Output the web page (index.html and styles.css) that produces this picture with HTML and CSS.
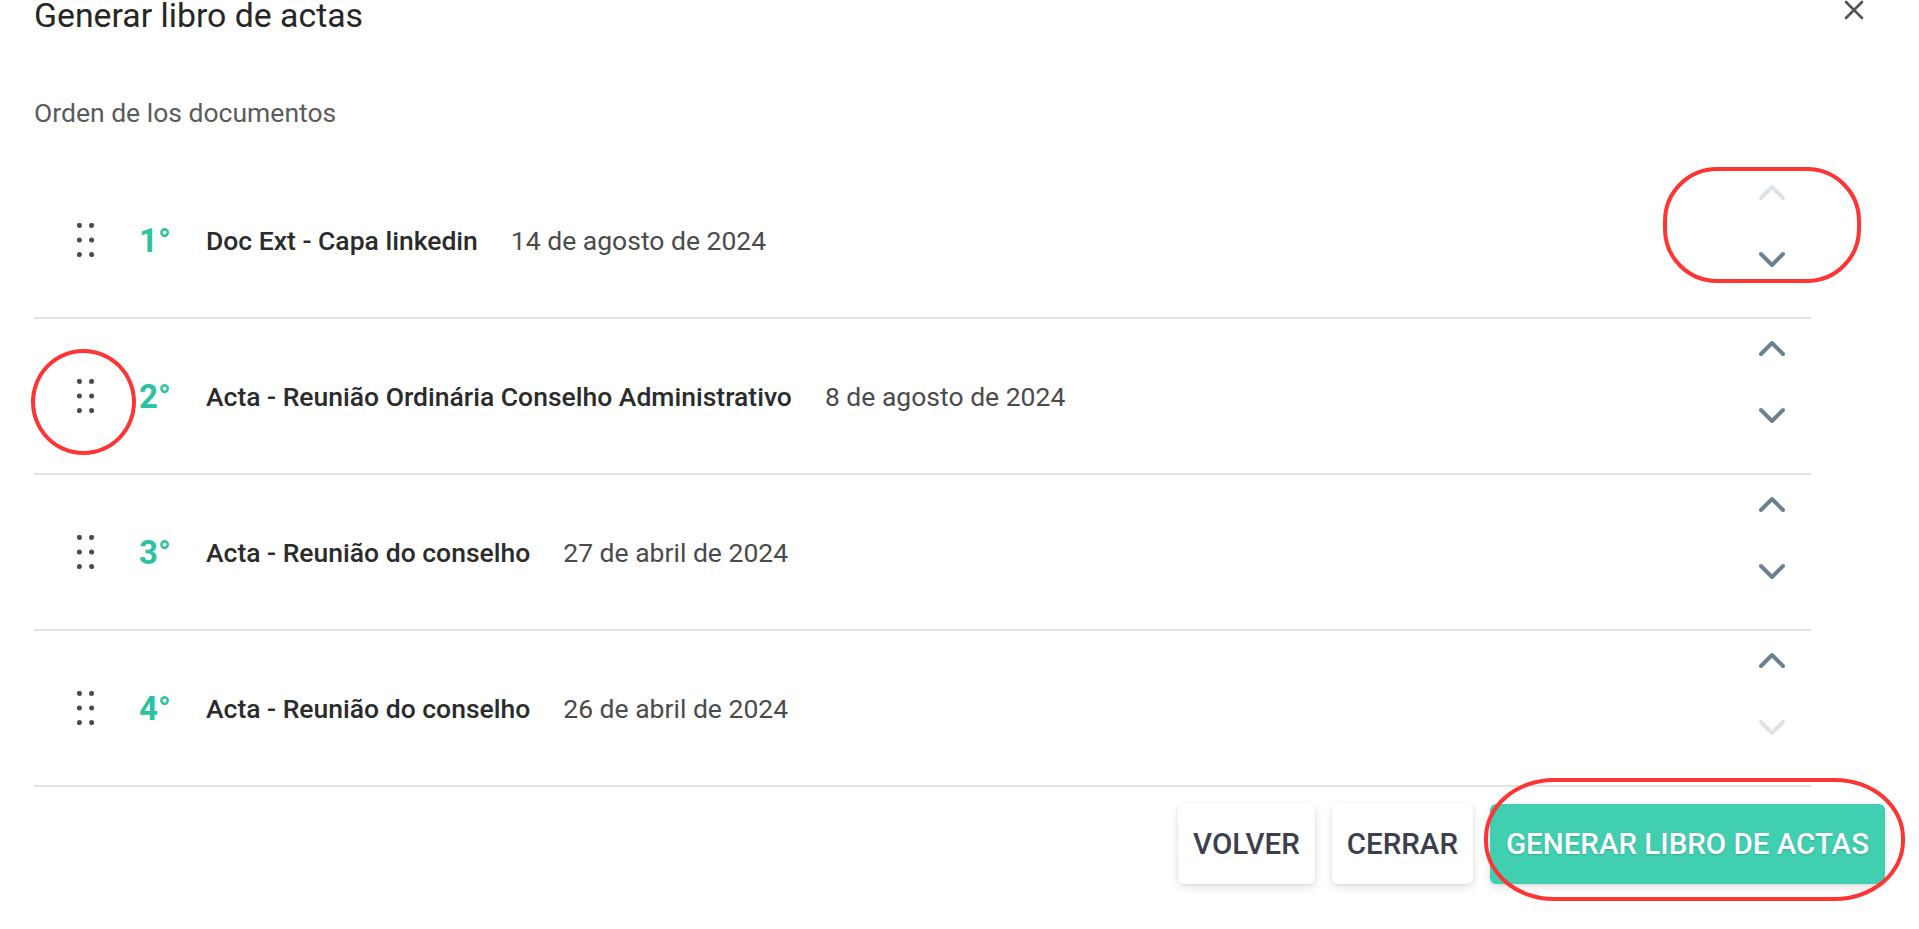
FILE: index.html
```html
<!DOCTYPE html>
<html lang="es">
<head>
<meta charset="utf-8">
<title>Generar libro de actas</title>
<link rel="stylesheet" href="styles.css">
</head>
<body>
<div class="modal">
  <header class="modal-header">
    <h1 class="modal-title">Generar libro de actas</h1>
    <button class="close-btn" aria-label="Cerrar">
      <svg width="20" height="20" viewBox="0 0 20 20"><path d="M2 2 L18 18 M18 2 L2 18" stroke="#50555a" stroke-width="2.6" stroke-linecap="round" fill="none"/></svg>
    </button>
  </header>

  <p class="subtitle">Orden de los documentos</p>

  <ul class="doc-list">
    <li class="doc-row">
      <span class="handle"><svg width="17" height="34" viewBox="0 0 17 34"><g fill="#454a57"><circle cx="2.4" cy="2.4" r="2.5"/><circle cx="14.6" cy="2.4" r="2.5"/><circle cx="2.4" cy="17" r="2.5"/><circle cx="14.6" cy="17" r="2.5"/><circle cx="2.4" cy="31.6" r="2.5"/><circle cx="14.6" cy="31.6" r="2.5"/></g></svg></span>
      <span class="num">1°</span>
      <span class="name">Doc Ext - Capa linkedin</span>
      <span class="date">14 de agosto de 2024</span>
      <span class="arrows">
        <button class="arrow disabled"><svg width="28" height="18" viewBox="0 0 28 18"><polyline points="3,15 14,4 25,15"/></svg></button>
        <button class="arrow"><svg width="28" height="18" viewBox="0 0 28 18"><polyline points="3,3 14,14 25,3"/></svg></button>
      </span>
    </li>
    <li class="doc-row">
      <span class="handle"><svg width="17" height="34" viewBox="0 0 17 34"><g fill="#454a57"><circle cx="2.4" cy="2.4" r="2.5"/><circle cx="14.6" cy="2.4" r="2.5"/><circle cx="2.4" cy="17" r="2.5"/><circle cx="14.6" cy="17" r="2.5"/><circle cx="2.4" cy="31.6" r="2.5"/><circle cx="14.6" cy="31.6" r="2.5"/></g></svg></span>
      <span class="num">2°</span>
      <span class="name">Acta - Reunião Ordinária Conselho Administrativo</span>
      <span class="date">8 de agosto de 2024</span>
      <span class="arrows">
        <button class="arrow"><svg width="28" height="18" viewBox="0 0 28 18"><polyline points="3,15 14,4 25,15"/></svg></button>
        <button class="arrow"><svg width="28" height="18" viewBox="0 0 28 18"><polyline points="3,3 14,14 25,3"/></svg></button>
      </span>
    </li>
    <li class="doc-row">
      <span class="handle"><svg width="17" height="34" viewBox="0 0 17 34"><g fill="#454a57"><circle cx="2.4" cy="2.4" r="2.5"/><circle cx="14.6" cy="2.4" r="2.5"/><circle cx="2.4" cy="17" r="2.5"/><circle cx="14.6" cy="17" r="2.5"/><circle cx="2.4" cy="31.6" r="2.5"/><circle cx="14.6" cy="31.6" r="2.5"/></g></svg></span>
      <span class="num">3°</span>
      <span class="name">Acta - Reunião do conselho</span>
      <span class="date">27 de abril de 2024</span>
      <span class="arrows">
        <button class="arrow"><svg width="28" height="18" viewBox="0 0 28 18"><polyline points="3,15 14,4 25,15"/></svg></button>
        <button class="arrow"><svg width="28" height="18" viewBox="0 0 28 18"><polyline points="3,3 14,14 25,3"/></svg></button>
      </span>
    </li>
    <li class="doc-row">
      <span class="handle"><svg width="17" height="34" viewBox="0 0 17 34"><g fill="#454a57"><circle cx="2.4" cy="2.4" r="2.5"/><circle cx="14.6" cy="2.4" r="2.5"/><circle cx="2.4" cy="17" r="2.5"/><circle cx="14.6" cy="17" r="2.5"/><circle cx="2.4" cy="31.6" r="2.5"/><circle cx="14.6" cy="31.6" r="2.5"/></g></svg></span>
      <span class="num">4°</span>
      <span class="name">Acta - Reunião do conselho</span>
      <span class="date">26 de abril de 2024</span>
      <span class="arrows">
        <button class="arrow"><svg width="28" height="18" viewBox="0 0 28 18"><polyline points="3,15 14,4 25,15"/></svg></button>
        <button class="arrow disabled"><svg width="28" height="18" viewBox="0 0 28 18"><polyline points="3,3 14,14 25,3"/></svg></button>
      </span>
    </li>
  </ul>

  <footer class="modal-footer">
    <button class="btn">VOLVER</button>
    <button class="btn">CERRAR</button>
    <button class="btn btn-primary">GENERAR LIBRO DE ACTAS</button>
  </footer>

  <span class="mark mark-arrows"></span>
  <span class="mark mark-handle"></span>
  <span class="mark mark-button"></span>
</div>
</body>
</html>
```

FILE: styles.css
```css
* { box-sizing: border-box; }

html, body {
  margin: 0;
  padding: 0;
  background: #ffffff;
}

body {
  font-family: Roboto, "Liberation Sans", Arial, sans-serif;
  color: #2f2f2f;
  overflow: hidden;
}

.modal {
  position: relative;
  width: 1919px;
  height: 929px;
}

.modal-header {
  display: flex;
  justify-content: space-between;
  align-items: flex-start;
  padding: 0 55px 0 34px;
}

.modal-title {
  margin: 0;
  font-size: 33.8px;
  line-height: 32px;
  font-weight: 400;
  color: #262626;
}

.close-btn {
  background: none;
  border: 0;
  padding: 0;
  margin-top: 0;
  width: 20px;
  height: 20px;
  display: flex;
}

.subtitle {
  margin: 65px 0 0 34px;
  font-size: 26.5px;
  line-height: 32px;
  color: #5b5b5b;
}

.doc-list {
  list-style: none;
  margin: 34px 108px 0 34px;
  padding: 0;
}

.doc-row {
  display: flex;
  align-items: center;
  height: 156px;
  padding-left: 43px;
  border-bottom: 2px solid #e4e4e4;
}

.handle {
  display: flex;
  width: 17px;
  margin-right: 45px;
}

.num {
  width: 67px;
  font-size: 33px;
  font-weight: 700;
  color: #29c39f;
}

.name {
  font-size: 26.5px;
  font-weight: 500;
  color: #2b2b2b;
  margin-right: 33px;
}

.date {
  font-size: 26.5px;
  color: #4b4b4b;
}

.arrows {
  margin-left: auto;
  margin-right: 19px;
  align-self: flex-start;
  margin-top: 9px;
  display: flex;
  flex-direction: column;
  gap: 28px;
}

.arrow {
  width: 40px;
  height: 40px;
  border: 0;
  padding: 0;
  background: none;
  display: flex;
  align-items: center;
  justify-content: center;
}

.arrow polyline {
  fill: none;
  stroke: #6c8190;
  stroke-width: 4;
  stroke-linecap: round;
  stroke-linejoin: round;
}

.arrow.disabled polyline {
  stroke: #dde2e7;
}

.modal-footer {
  display: flex;
  justify-content: flex-end;
  gap: 17px;
  padding: 17px 34px 0 0;
}

.btn {
  height: 80px;
  padding: 0 15px;
  border: 0;
  border-radius: 6px;
  background: #ffffff;
  color: #3b404c;
  font-family: Roboto, "Liberation Sans", Arial, sans-serif;
  font-size: 29.5px;
  font-weight: 500;
  box-shadow: 0 3px 10px rgba(0, 0, 0, 0.12), 0 1px 3px rgba(0, 0, 0, 0.06);
}

.btn-primary {
  background: #41cfb2;
  color: #ffffff;
  text-shadow: 0 1px 2px rgba(0, 0, 0, 0.18);
  padding: 0 16px;
}

.mark {
  position: absolute;
  border: 4px solid #ff3434;
}

.mark-arrows {
  left: 1663px;
  top: 167px;
  width: 198px;
  height: 116px;
  border-radius: 54px;
}

.mark-handle {
  left: 31px;
  top: 349px;
  width: 105px;
  height: 106px;
  border-radius: 50%;
}

.mark-button {
  left: 1484px;
  top: 778px;
  width: 421px;
  height: 123px;
  border-radius: 70px / 60px;
}
```
